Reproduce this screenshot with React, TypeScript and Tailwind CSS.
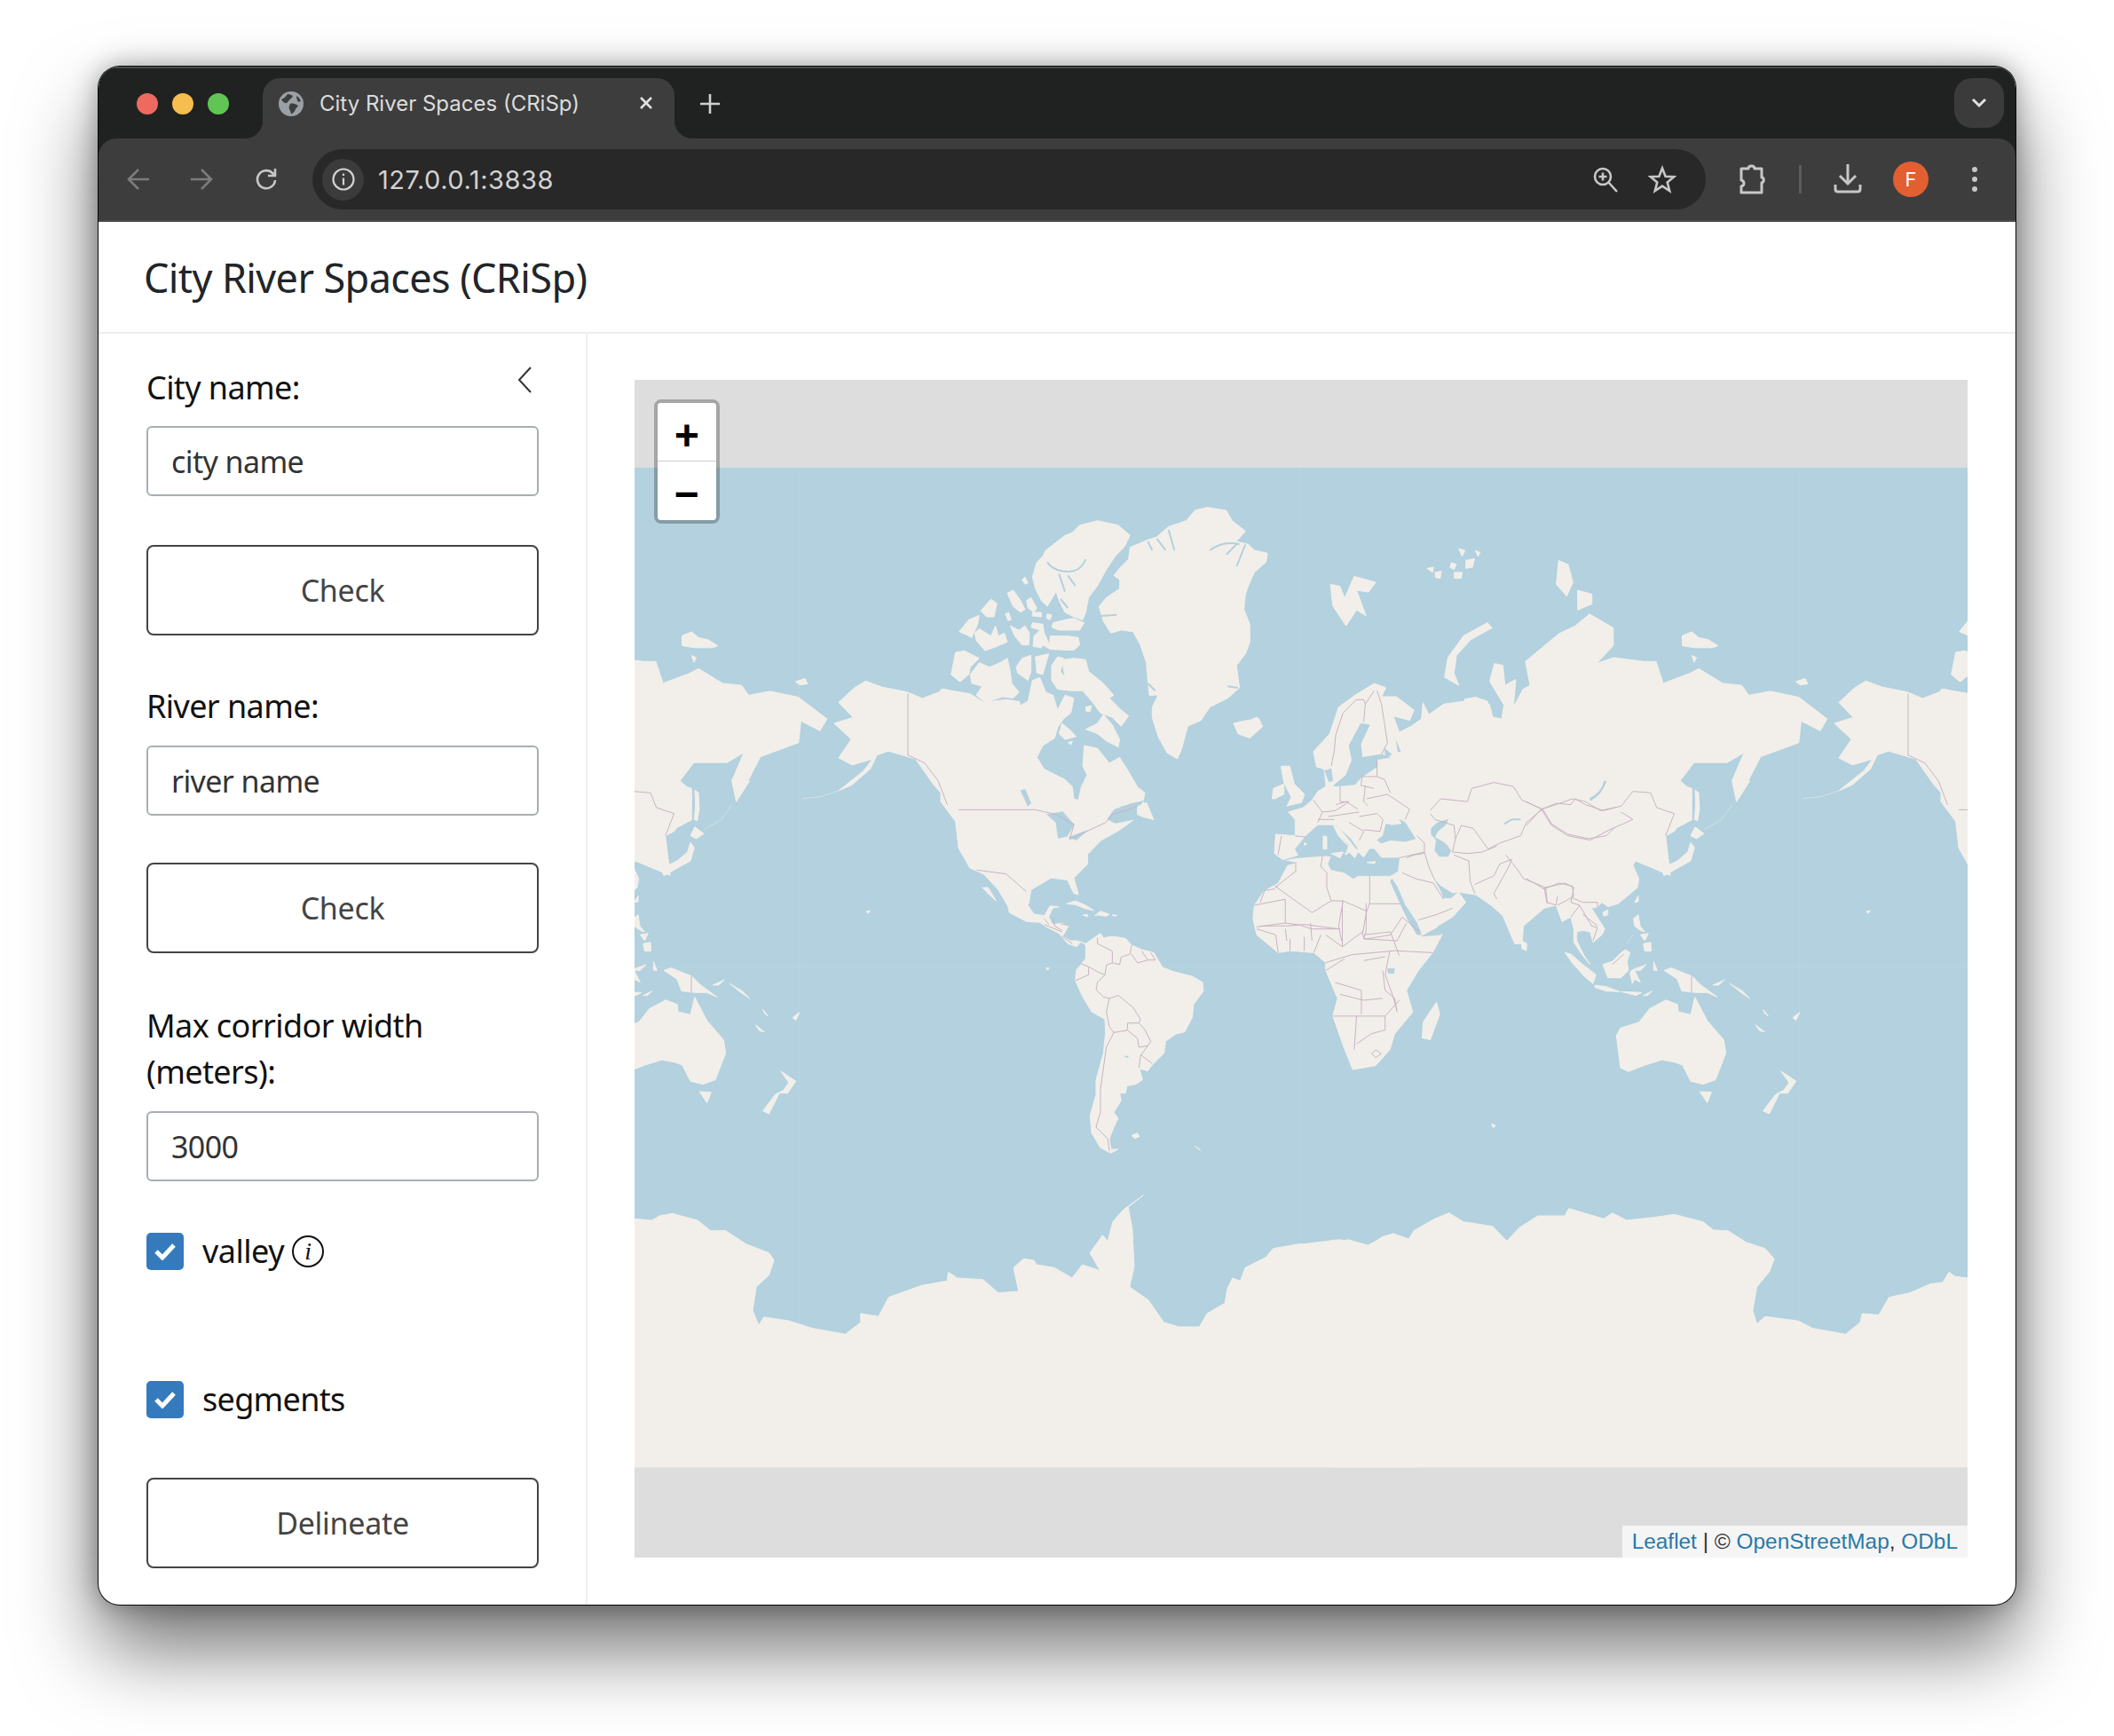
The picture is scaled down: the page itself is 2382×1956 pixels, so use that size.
import React from "react";

const Z4 = "translate(700 420) scale(.5102 .4464)";
const Z5 = "translate(1400 540) scale(.5357 .4464)";
const Z7 = "translate(700 1100) scale(.574 .3333)";
const Z8 = "translate(1500 1100) scale(.4656 .3333)";
const Z9 = "translate(1080 1000) scale(.3333)";
const Z10 = "translate(1420 760) scale(.3333)";
const Z11 = "translate(1720 880) scale(.3333)";
const Z12 = "translate(1060 570) scale(.3333)";

type Shape = { t: string; k: "land" | "water" | "river" | "line" | "chain"; d: string };

const americas: Shape[] = [
  // greenland
  { t: Z12, k: "land", d: "M640,140 700,115 730,105 770,70 830,50 860,15 900,5 965,15 985,50 1030,85 1000,120 1040,130 1060,150 1105,160 1100,190 1060,225 1040,270 1030,300 1025,350 1045,400 1045,460 1030,500 1000,540 1010,615 970,650 910,680 880,725 835,745 815,820 800,855 765,835 735,780 715,715 715,680 735,640 705,640 700,590 695,530 675,470 650,425 610,420 575,430 550,390 535,340 560,310 605,280 605,250 585,235 610,205 635,180z" },
  { t: Z12, k: "river", d: "M910,150C950,120 990,125 1010,130M965,165 1000,130M1030,130 1000,205M540,372 595,368M970,610 1005,615M700,600 725,625M700,120 715,150M730,110 760,150M770,80 790,150" },
  // iceland
  { t: Z12, k: "land", d: "M990,735 1020,728 1075,718 1088,745 1045,785 1005,770z" },
  // ellesmere and arctic islands
  { t: Z12, k: "land", d: "M355,150 420,100 445,90 470,65 530,50 600,65 640,100 620,140 590,170 560,215 530,270 500,310 490,360 480,385 450,375 420,360 400,320 390,290 360,340 340,320 320,280 310,240 325,190 345,170z" },
  { t: Z12, k: "river", d: "M360,190C380,220 420,225 450,220 470,215 485,195 490,180M400,230 420,290M430,235 455,270M405,315 430,345" },
  { t: Z12, k: "land", d: "M275,250 285,240 295,260 285,265zM225,295 245,285 270,320 285,350 270,360 245,340zM290,320 305,310 325,345 315,360 295,345zM135,355 170,315 190,330 180,375 155,375zM62,425 95,385 130,370 125,400 105,445 85,435zM115,430 130,415 170,440 185,405 195,440 215,430 225,460 190,475 150,490 120,455zM235,405 265,420 285,405 300,430 298,470 275,470 250,440zM218,365 230,360 238,385 228,388zM310,395 345,400 350,430 368,470 370,440 430,440 465,445 470,470 450,488 370,485 345,470 340,480 312,475 315,440 335,420 305,410zM380,395 420,385 450,380 485,395 470,420 400,420 375,410zM310,360 340,360 340,375 310,372zM360,365 375,368 370,385 358,380zM35,570 50,495 80,490 130,515 100,545 95,570 65,595zM100,570 130,530 165,545 200,530 225,515 235,560 240,600 265,630 245,650 210,645 150,665 120,640 140,610 105,600zM255,545 275,515 305,505 305,560 295,590 260,565zM320,510 365,500 345,570 325,565zM375,540 395,510 415,515 405,560 420,580 410,520 450,515 490,520 500,560 550,600 585,640 570,650 610,690 635,710 610,745 580,715 540,700 510,660 480,625 440,625 395,620 375,590zM400,770 410,735 440,760 458,780 420,790zM490,755 530,735 550,705 580,740 605,790 600,815 560,795 530,770zM430,800 445,795 440,808zM490,680 510,675 505,695 492,695z" },
  // canada mainland
  { t: Z12, k: "land", d: "M0,620 15,620 50,630 110,650 140,665 135,680 190,670 225,655 260,680 295,660 310,590 335,580 355,630 380,640 395,690 420,640 450,650 440,700 415,720 395,750 385,785 345,810 325,850 350,890 420,925 445,950 450,990 465,995 475,950 495,910 480,880 485,810 530,820 570,870 605,850 630,890 665,950 690,970 685,995 640,1005 585,1025 560,1060 600,1080 60,1080 0,1000z" },
  { t: Z12, k: "land", d: "M660,1040 685,1000 718,1060 680,1050z" },
  { t: Z12, k: "water", d: "M45,725 100,705 110,715 75,750 60,735zM120,830 150,805 188,795 160,815 135,835zM175,870 205,860 185,878zM270,962 285,958 305,1005 295,1015z" },
  // alaska and west canada
  { t: Z4, k: "land", d: "M480,832 515,795 540,778 575,793 632,806 665,822 715,800 770,810 800,832 850,825 880,830 880,1000 740,1110 725,1085 690,1040 650,975 590,955 565,965 550,1000 510,1040 480,1055 535,1005 555,975 510,990 480,972 508,925 470,885 512,870z" },
  { t: Z4, k: "chain", d: "M480,1055 440,1070 400,1075" },
  { t: Z4, k: "land", d: "M385,780 405,772 412,785 395,788z" },
  // usa
  { t: Z4, k: "land", d: "M738,1130 745,1100 1075,1100 1072,1125 1085,1140 1130,1130 1100,1155 1060,1180 1030,1215 1030,1240 1000,1275 1008,1315 1000,1315 985,1280 950,1275 905,1305 900,1340 860,1340 845,1320 800,1265 770,1250 745,1200z" },
  { t: Z4, k: "water", d: "M940,1115 975,1108 1000,1140 985,1170 965,1175 960,1135zM988,1172 1030,1155 1005,1180zM1160,1092 1105,1095 1075,1125 1090,1132 1115,1110 1140,1120z" },
  { t: Z4, k: "land", d: "M1140,1095 1160,1085 1176,1128 1140,1115z" },
  // mexico and central america
  { t: Z9, k: "land", d: "M130,0 168,65 172,85 230,115 275,118 300,135 340,155 370,190 400,200 415,182 435,200 430,190 400,180 378,180 352,165 372,130 350,120 318,125 305,100 318,70 340,65 310,62 290,95 255,90 235,60 222,20 225,0zM80,0 100,0 128,45 110,30zM365,55 395,45 430,60 458,78 430,72 395,58zM460,95 480,80 510,90 500,97 470,93zM420,92 437,92 435,100zM520,92 537,94 525,98zM380,0 400,0 405,25 390,15z" },
  // south america
  { t: Z9, k: "land", d: "M430,190 465,165 480,155 490,170 520,165 565,172 585,195 620,210 660,220 690,270 730,285 790,300 825,320 828,350 795,395 790,440 765,488 735,495 700,520 695,560 655,600 640,620 612,612 622,650 600,665 570,670 565,695 545,695 550,720 525,760 540,780 525,810 510,850 515,885 540,885 515,898 480,880 450,830 445,770 465,700 465,650 490,560 497,490 495,445 450,420 420,370 395,315 398,280 430,240zM585,838 605,830 612,842 595,848zM800,875 818,888 808,880zM296,272 306,272 302,280z" },
  { t: Z9, k: "water", d: "M560,570 575,570 570,576z" },
  { t: Z9, k: "line", d: "M290,105 305,125M320,100 325,130 350,145M345,122 370,128M290,125 350,150M350,165 385,190M470,170 470,190 520,215 520,255 500,262 495,295 470,320M415,258 445,270 470,285 495,295M440,270 440,295 395,315M470,320 465,345 490,370 510,375 500,420 510,470 525,490M510,375 540,365 590,405 615,445 610,458 572,458 570,483 525,490M525,490 500,540 480,680 480,760 465,810 505,850 510,890M572,483 605,510 610,540 640,535 650,520 630,480 610,458M640,535 615,570 610,610M615,565 655,595M520,255 545,260 550,235 580,225 585,195M585,225 605,255 640,245 620,215M640,245 665,245 650,220" },
  { t: Z4, k: "line", d: "M633,810 633,965 670,985 700,1030 720,1090M745,1103 915,1103 960,1115 1000,1140 990,1178 1070,1135 1085,1115 1140,1095M785,1255 850,1265 895,1310" },
];

const eastern: Shape[] = [
  // europe and asia
  { t: Z10, k: "land", d: "M75,625 48,605 52,540 118,545 118,490 95,465 145,450 175,425 195,395 222,378 218,335 215,320 190,312 180,260 235,200 265,110 320,70 385,30 425,45 410,75 460,75 520,120 505,155 450,140 470,195 510,175 545,150 550,95 570,135 620,100 690,90 775,100 790,160 1200,160 1200,500 1000,780 960,790 890,850 885,910 860,910 820,815 780,780 730,745 700,740 670,735 695,770 650,820 600,850 545,870 480,680 380,640 150,640z" },
  { t: Z5, k: "land", d: "M467,555 490,550 515,560 525,600 545,605 550,570 520,510 530,465 548,470 552,520 575,505 570,575 590,530 605,520 595,460 630,425 665,390 700,370 730,340 780,375 780,420 745,465 780,450 845,460 870,460 885,515 940,490 960,478 1010,515 1050,520 1065,545 1110,535 1170,550 1230,605 1215,635 1175,610 1170,665 1125,685 1090,700 1060,770 1040,810 1030,760 1055,690 1020,715 950,715 915,770 945,780 945,860 905,885 890,900 900,1000 500,800z" },
  { t: Z11, k: "land", d: "M0,0 520,0 555,30 560,60 530,125 500,170 470,185 440,215 415,235 410,215 375,225 345,235 380,250 360,285 380,330 375,360 340,390 310,415 275,425 255,410 240,425 220,430 265,500 255,520 225,545 215,510 190,505 170,510 170,540 195,590 215,620 190,590 160,545 160,500 150,460 120,475 100,420 65,420 35,445 0,475z" },
  // africa
  { t: Z5, k: "land", d: "M22,1110 25,1075 45,1040 75,1020 95,975 175,950 330,950 340,1000 420,1150 400,1195 370,1240 345,1290 358,1345 320,1400 310,1440 280,1480 232,1490 215,1440 190,1355 200,1310 175,1240 175,1220 150,1195 100,1190 75,1195 30,1150z" },
  // seas
  { t: Z10, k: "water", d: "M78,628 130,612 118,590 155,545 195,510 245,510 262,545 300,585 285,605 265,600 240,615 215,613 120,620zM240,615 262,600 290,610 300,580 335,605 350,620 370,590 385,590 410,620 470,620 465,665 440,680 380,680 330,680 315,690 285,670 240,660 230,640zM255,510 305,555 330,590 300,580 262,530zM395,560 415,545 425,505 445,510 480,505 470,490 490,500 525,555 490,565 440,560 410,570zM578,520 600,500 635,490 625,510 600,530 590,550 625,570 645,595 635,615 605,615 590,595 595,560 578,540zM248,375 290,340 310,290 300,240 340,165 370,170 340,235 345,280 410,270 440,280 395,288 395,312 345,345 320,372 255,378zM218,325 240,318 245,360 232,362zM445,690 462,715 490,780 530,840 545,880 530,880 500,830 480,790 440,700zM545,885 610,880 650,825 600,855zM590,695 610,715 650,740 665,738 645,755 620,755 610,730zM460,225 475,262 465,260zM420,250 445,270 425,280z" },
  { t: Z10, k: "river", d: "M1165,360C1160,390 1140,410 1115,425M825,505 850,490 880,490" },
  // med islands
  { t: Z10, k: "land", d: "M213,545 225,548 225,590 213,590zM240,605 280,600 270,620zM360,635 390,632 385,640zM148,568 158,572 150,578zM290,610 300,575 285,560 260,530 250,515 262,515 300,560 330,600 320,620 300,600z" },
  // uk and ireland
  { t: Z10, k: "land", d: "M70,310 100,310 115,370 150,405 140,432 90,445 105,415 80,365zM40,420 45,385 80,370 80,405 50,420z" },
  // arctic russia, madagascar, sri lanka
  { t: Z5, k: "land", d: "M185,265 205,270 215,300 235,245 280,260 265,285 240,280 260,345 240,330 218,370 190,320zM515,362 525,375 480,405 450,445 445,490 455,520 425,500 432,450 465,395zM665,205 685,215 695,260 682,295 660,265zM705,280 735,290 735,315 705,330zM925,395 945,385 960,400 980,405 1000,420 990,425 950,425 925,420zM945,445 955,450 950,462zM1165,510 1185,505 1185,515zM378,1410 380,1370 408,1320 415,1350 395,1415zM587,1165 598,1172 597,1190 588,1185zM0,620 30,600 42,625 15,650z" },
  // franz josef land
  { t: Z5, k: "land", d: "M388,225 402,222 400,235zM405,235 418,232 416,250 406,248zM440,210 450,215 445,228 436,222zM455,175 468,180 462,195zM470,205 488,200 484,222 470,225zM490,180 500,185 495,195zM445,235 462,235 460,250 446,250z" },
  // japan, korea, sakhalin and pacific islands
  { t: Z11, k: "land", d: "M415,240 440,230 450,265 425,285 420,245zM570,30 582,40 585,95 578,135 568,130 572,80zM555,185 570,155 600,178 575,195zM455,295 510,270 545,240 555,208 568,225 555,270 510,295 465,320zM695,0 755,0 710,70zM365,410 378,388 378,408zM258,445 275,435 275,452 262,457zM362,465 378,452 384,490 400,510 385,505 365,490zM395,550 420,545 422,575 400,575zM385,520 412,515 400,540zM258,620 290,610 320,580 335,570 350,580 340,610 345,640 320,665 275,665zM130,580 150,585 190,620 235,655 225,685 195,660 155,615zM230,690 270,695 315,712 270,710 232,698zM320,712 390,715 370,725zM395,725 425,710 410,725zM355,640 405,620 385,640 365,640 385,680 365,670 358,685 350,650zM465,640 490,632 560,660 590,690 645,730 610,715 570,715 525,710 510,670zM630,690 670,672 650,690zM430,610 442,640 430,640zM775,825 805,848 790,845zM900,800 922,785 910,808zM1150,440 1162,438 1155,448zM800,772 818,795 805,785zM688,685 730,710 755,735 725,715z" },
  { t: Z11, k: "river", d: "M215,60C240,50 260,25 268,0" },
  { t: Z11, k: "chain", d: "M600,165 660,130 695,80M340,550 360,520" },
  // australia and new zealand
  { t: Z8, k: "land", d: "M690,200 700,175 745,155 770,110 810,80 838,95 840,120 870,130 880,70 910,150 950,215 955,260 930,350 900,365 870,355 850,300 830,290 800,283 760,300 720,322 700,310zM892,390 920,392 910,428zM1088,320 1125,355 1105,395 1085,395 1060,465 1045,455 1075,400 1095,385 1108,360zM388,498 398,505 392,512zM1028,165 1045,185 1035,182zM1118,140 1133,122 1125,148z" },
  // borders
  { t: Z10, k: "line", d: "M385,55 355,100 350,85 325,85 280,130 255,205 250,260 240,310M355,100 350,160M395,55 410,100 430,230 410,270M395,290 395,345 345,345 340,375 385,385M270,378 270,430M355,375 350,430 365,445M360,420 430,405 445,415 505,455 490,490M395,345 420,355 440,400M180,425 210,465 195,500M195,490 250,490M210,465 255,460 300,430 270,430M255,440 290,430 330,455M230,480 300,470 335,465M335,480 395,470 415,490 405,530 350,525M300,500 350,530 335,560M530,545 555,570 555,600M72,545 60,610M118,545 155,550M470,620 555,600M495,620 520,610 555,605M555,600 570,650 590,695M480,670 525,690 585,705 620,760M535,830 600,810 650,790M370,680 370,775M370,775 475,775M655,610 705,630 710,700 725,740M725,710 790,680 810,640 850,625M575,460 610,420 700,430 715,385 790,365 855,378 885,425 955,455M575,470 590,490 655,510 660,555 680,510 720,520 770,590 810,570 880,545 900,500 955,455M660,555 650,600 700,605 750,600 800,580M955,455 1000,435 1050,440 1065,420 1100,440 1160,460 1200,450M955,455 985,505 1040,540 1110,555 1170,545 1200,515M830,610 870,660 890,690 965,720 1030,705 1060,720 1050,770 1080,780M850,625 840,650 790,740 800,760M965,720 970,770 1000,780 1005,750M120,635 120,665 50,720M0,770 15,730 50,725M50,715 175,805 240,765 225,720 225,670 205,650 210,615M240,765 280,765 360,800 370,775M280,765 265,850 275,900M360,800 345,880 355,895 440,880 480,820M480,820 540,870M0,850 90,850 150,845 265,860M85,860 90,900M170,840 175,900M350,880 440,870 470,950" },
  { t: Z11, k: "line", d: "M0,70 50,95 100,80 155,60 200,70 250,100 320,85 360,35 420,40 440,90 500,110 470,185M0,150 50,95 85,150 140,185 215,200 280,165 360,130 320,105M0,330 60,365 110,345 155,355 160,390 105,420M60,360 70,415M155,395 190,410 240,410 240,425M150,460 180,420 220,490 240,495 225,540M190,450 240,490M558,660 558,715M290,620 330,585" },
  { t: Z5, k: "line", d: "M175,1220 230,1200 320,1190M310,1190 300,1250 315,1300 325,1340M195,1270 250,1290 250,1350M190,1355 300,1355 330,1315M240,1355 235,1440M300,1355 300,1390 270,1400 240,1425M320,1190 400,1195M215,1210 175,1240M255,1140 210,1180 175,1150M280,1440 292,1450 280,1460 272,1450zM295,1240 300,1290 320,1310 325,1345M30,1135 70,1150 75,1195M100,1160 100,1190M130,1155 130,1190M165,1150 150,1195M90,1120 120,1125 145,1135 205,1135M25,1075 90,1060 90,1120 30,1130M260,1070 260,1140 255,1160 325,1165 345,1120M210,1065 210,1180M255,1215 300,1205M205,1300 255,1315 295,1310" },
  { t: Z5, k: "water", d: "M305,1235 320,1235 318,1248 306,1246z" },
];

const antarctica: Shape[] = [
  { t: Z7, k: "land", d: "M26,820 60,825 75,810 100,802 150,825 175,860 205,860 245,905 290,935 300,960 290,1010 265,1050 258,1130 270,1180 280,1152 330,1165 375,1190 440,1210 470,1170 470,1140 505,1150 525,1085 590,1045 640,1030 642,1000 660,1020 710,1025 740,1070 780,1065 770,985 790,955 810,960 815,975 850,985 885,1020 905,975 940,995 920,935 945,875 955,895 965,830 985,790 1025,740 995,780 1003,850 1007,980 998,1050 1035,1095 1065,1170 1095,1185 1135,1185 1150,1140 1185,1105 1190,1055 1200,1020 1215,1030 1225,985 1265,950 1280,920 1330,905 1340,905 1410,890 1465,910 1500,880 1515,870 1550,890 1568,850 1568,1659 26,1659z" },
  { t: Z8, k: "land", d: "M0,905 40,890 90,910 125,880 150,870 185,895 200,860 250,820 285,800 320,830 390,845 425,895 455,850 500,810 565,810 575,785 660,820 680,800 715,825 780,815 830,805 900,830 925,858 960,860 1005,900 1050,920 1072,955 1060,1000 1030,1050 1020,1130 1030,1175 1050,1150 1130,1165 1165,1190 1245,1210 1280,1170 1285,1140 1325,1145 1350,1085 1400,1070 1450,1040 1480,1035 1495,1000 1510,1015 1540,1020 1540,1659 0,1659z" },
];

function Layer({ items, dx = 0 }: { items: Shape[]; dx?: number }) {
  return (
    <g transform={`translate(${dx} 0)`}>
      {items.map((s, i) => {
        if (s.k === "land") return <path key={i} transform={s.t} d={s.d} fill="#f2efea" stroke="#f2efea" strokeWidth="1" vectorEffect="non-scaling-stroke" />;
        if (s.k === "water") return <path key={i} transform={s.t} d={s.d} fill="#b3d1de" stroke="#b3d1de" strokeWidth="0.5" vectorEffect="non-scaling-stroke" />;
        if (s.k === "river") return <path key={i} transform={s.t} d={s.d} fill="none" stroke="#b3d1de" strokeWidth="2" vectorEffect="non-scaling-stroke" />;
        if (s.k === "chain") return <path key={i} transform={s.t} d={s.d} fill="none" stroke="#d3e2e6" strokeWidth="1" vectorEffect="non-scaling-stroke" />;
        return <path key={i} transform={s.t} d={s.d} fill="none" stroke="#c8b3c2" strokeWidth="1" vectorEffect="non-scaling-stroke" />;
      })}
    </g>
  );
}

function WorldMap() {
  return (
    <svg viewBox="715 428 1502 1327" className="block w-full h-full blur-[0.6px]" strokeLinejoin="round">
      <rect x="715" y="527" width="1502" height="1126" fill="#b3d1de" />
      <Layer items={antarctica} />
      <Layer items={eastern} dx={-1127} />
      <Layer items={americas} />
      <Layer items={eastern} />
      <Layer items={americas} dx={1127} />
      <path d="M901,527V1653M1465,527V1653M2028,527V1653M715,1090H2217" stroke="#ffffff" strokeOpacity="0.12" strokeWidth="1" fill="none" />
    </svg>
  );
}

const GlobeIcon = () => (
  <svg width="28" height="28" viewBox="0 0 28 28">
    <circle cx="14" cy="14" r="14" fill="#9aa0a6" />
    <path d="M3 9c3-1 5-3 7-6 3 0 4 1 6 2-1 3-3 3-4 5-2 1-2 4-4 3-2 0-4-2-5-4zM13 14c3-1 6 0 9 2-1 2-2 2-3 4-1 3-3 4-5 6 0-3-1-4-2-6-1-2 0-4 1-6zM20 5c2 1 4 3 5 6l-3 1c-1-2-2-4-2-7z" fill="#3d3d3d" />
  </svg>
);

function Toolbar() {
  return (
    <div className="h-[94px] bg-[#3d3d3d] border-b-2 border-[#4a4a4a] rounded-t-[20px] flex items-center pl-[31px] shrink-0">
      <svg width="28" height="28" viewBox="0 0 28 28" fill="none" stroke="#7c7c7c" strokeWidth="2.6">
        <path d="M26 14H3M14 3 3 14l11 11" />
      </svg>
      <svg width="28" height="28" viewBox="0 0 28 28" fill="none" stroke="#7c7c7c" strokeWidth="2.6" className="ml-[43px]">
        <path d="M2 14h23M14 3l11 11-11 11" />
      </svg>
      <svg width="28" height="28" viewBox="0 0 28 28" fill="none" stroke="#c7c7c7" strokeWidth="2.6" className="ml-[45px]">
        <path d="M24 15a10 10 0 1 1-3-8l3 3M24 2v8h-8" />
      </svg>
      <div className="ml-[38px] w-[1570px] h-[68px] rounded-[34px] bg-[#282828] flex items-center pl-[11px] pr-[33px]">
        <div className="w-[47px] h-[47px] rounded-full bg-[#3b3b3b] flex items-center justify-center">
          <svg width="26" height="26" viewBox="0 0 26 26" fill="none" stroke="#d0d0d0" strokeWidth="2.2">
            <circle cx="13" cy="13" r="11.5" />
            <path d="M13 11.5v8M13 6.5v2.6" />
          </svg>
        </div>
        <span className="ml-[16px] text-[29px] tracking-[0.55px] leading-none text-[#d2d2d2] font-['Inter',sans-serif]">127.0.0.1:3838</span>
        <svg width="30" height="30" viewBox="0 0 30 30" fill="none" stroke="#c7c7c7" strokeWidth="2.6" className="ml-auto">
          <circle cx="12" cy="12" r="9" />
          <path d="M18.5 18.5 28 29M12 7.5v9M7.5 12h9" />
        </svg>
        <svg width="32" height="32" viewBox="0 0 32 32" fill="none" stroke="#c7c7c7" strokeWidth="2.6" className="ml-[33px]">
          <path d="M16 3.5l3.6 9.2 9.6.5-7.5 6.2 2.5 9.6-8.2-5.4-8.2 5.4 2.5-9.6-7.5-6.2 9.6-.5z" />
        </svg>
      </div>
      <svg width="32" height="36" viewBox="0 0 32 36" fill="none" stroke="#c7c7c7" strokeWidth="3" className="ml-[37px]">
        <path d="M3 6h8c0-4 7-4 7 0h8v10c3 0 3 5 0 6v11H3v-7c4-1 4-6 0-7z" strokeLinejoin="round" />
      </svg>
      <div className="ml-[36px] w-[3px] h-[32px] bg-[#5c5c5c]" />
      <svg width="32" height="34" viewBox="0 0 32 34" fill="none" stroke="#c7c7c7" strokeWidth="3" className="ml-[36px]">
        <path d="M16 0v22M7 13l9 9 9-9M2 23v5c0 2 1 3 3 3h22c2 0 3-1 3-3v-5" />
      </svg>
      <div className="ml-[35px] w-[40px] h-[40px] rounded-full bg-[#e25f32] flex items-center justify-center text-white text-[22px] font-['Inter',sans-serif]">F</div>
      <div className="ml-[49px] flex flex-col gap-[5px]">
        <div className="w-[6px] h-[6px] rounded-full bg-[#c7c7c7]" />
        <div className="w-[6px] h-[6px] rounded-full bg-[#c7c7c7]" />
        <div className="w-[6px] h-[6px] rounded-full bg-[#c7c7c7]" />
      </div>
    </div>
  );
}

function TitleBar() {
  return (
    <div className="h-[79px] bg-[#202222] flex items-start shrink-0 border-t-2 border-[#4a4a4a] -mb-[20px] pb-[20px] box-content">
      <div className="flex gap-[16px] ml-[43px] mt-[28px]">
        <div className="w-[24px] h-[24px] rounded-full bg-[#ee6a5f]" />
        <div className="w-[24px] h-[24px] rounded-full bg-[#f5be4f]" />
        <div className="w-[24px] h-[24px] rounded-full bg-[#61c554]" />
      </div>
      <div className="relative ml-[38px] mt-[11px] w-[464px] h-[68px] bg-[#3d3d3d] rounded-t-[20px] flex items-center pl-[18px] pb-[10px] z-30">
        <div className="absolute -left-[20px] bottom-0 w-[20px] h-[20px] bg-[#3d3d3d]">
          <div className="w-full h-full bg-[#202222] rounded-br-[20px]" />
        </div>
        <div className="absolute -right-[20px] bottom-0 w-[20px] h-[20px] bg-[#3d3d3d]">
          <div className="w-full h-full bg-[#202222] rounded-bl-[20px]" />
        </div>
        <GlobeIcon />
        <span className="ml-[18px] text-[24px] leading-none text-[#dcdcdc] font-['Inter',sans-serif] whitespace-nowrap">City River Spaces (CRiSp)</span>
        <svg width="16" height="16" viewBox="0 0 16 16" stroke="#e0e0e0" strokeWidth="2.6" className="absolute left-[424px] top-[20px]">
          <path d="M2 2l12 12M14 2 2 14" />
        </svg>
      </div>
      <svg width="22" height="22" viewBox="0 0 22 22" stroke="#d0d0d0" strokeWidth="2.6" className="ml-[29px] mt-[29px]">
        <path d="M11 0v22M0 11h22" />
      </svg>
      <div className="ml-auto mr-[13px] mt-[11px] w-[56px] h-[56px] rounded-[20px] bg-[#3b3b3b] flex items-center justify-center">
        <svg width="18" height="12" viewBox="0 0 18 12" fill="none" stroke="#e0e0e0" strokeWidth="3">
          <path d="M2 2l7 7 7-7" />
        </svg>
      </div>
    </div>
  );
}

const inputCls = "block w-[442px] h-[79px] border-2 border-[#a9aeb4] rounded-[6px] pl-[26px] text-[34px] tracking-[-0.6px] text-[#333] bg-white outline-none";
const btnCls = "block w-[442px] h-[102px] border-2 border-[#444] rounded-[8px] bg-white text-[34px] tracking-[-0.3px] text-[#444]";
const labelCls = "block text-[36px] tracking-[-0.6px] leading-[52px] text-[#111]";

const Check = () => (
  <div className="w-[42px] h-[42px] rounded-[5px] bg-[#357abd] flex items-center justify-center shrink-0">
    <svg width="24" height="20" viewBox="0 0 24 20" fill="none" stroke="#fff" strokeWidth="5">
      <path d="M2 10l7 7L22 3" />
    </svg>
  </div>
);

function Sidebar() {
  return (
    <div className="relative w-[551px] shrink-0 border-r-2 border-[#eeeeee] pl-[54px] pt-[35px]">
      <svg width="18" height="32" viewBox="0 0 18 32" fill="none" stroke="#333" strokeWidth="2" className="absolute left-[471px] top-[36px]">
        <path d="M16 2 3 16l13 14" />
      </svg>
      <label className={`${labelCls} mb-[17px]`}>City name:</label>
      <input className={inputCls} defaultValue="city name" />
      <button className={`${btnCls} mt-[55px]`}>Check</button>
      <label className={`${labelCls} mt-[54px] mb-[18px]`}>River name:</label>
      <input className={inputCls} defaultValue="river name" />
      <button className={`${btnCls} mt-[53px]`}>Check</button>
      <label className={`${labelCls} mt-[56px] mb-[18px] w-[442px]`}>Max corridor width (meters):</label>
      <input className={inputCls} defaultValue="3000" />
      <div className="mt-[58px] flex items-center h-[42px]">
        <Check />
        <span className="ml-[21px] text-[36px] tracking-[-0.5px] text-[#111] leading-none">valley</span>
        <span className="ml-[9px] w-[36px] h-[36px] rounded-full border-2 border-[#111] flex items-center justify-center text-[28px] italic leading-none font-['Liberation_Serif',serif] text-[#111]">i</span>
      </div>
      <div className="mt-[125px] flex items-center h-[42px]">
        <Check />
        <span className="ml-[21px] text-[36px] tracking-[-0.7px] text-[#111] leading-none">segments</span>
      </div>
      <button className={`${btnCls} mt-[67px]`}>Delineate</button>
    </div>
  );
}

export default function App() {
  return (
    <div className="w-[2382px] h-[1956px] bg-white pl-[111px] pt-[75px] overflow-hidden font-['Noto_Sans',sans-serif]">
      <div className="w-[2160px] h-[1733px] rounded-[24px] overflow-hidden flex flex-col bg-white shadow-[0_50px_90px_rgba(0,0,0,0.55),0_0_30px_rgba(0,0,0,0.35),0_0_0_1px_#111]">
        <TitleBar />
        <div className="relative z-20">
          <Toolbar />
        </div>
        <div className="h-[126px] border-b-2 border-[#eeeeee] flex items-center pl-[51px] shrink-0">
          <h1 className="text-[45px] tracking-[-0.6px] leading-none text-[#212529]">City River Spaces (CRiSp)</h1>
        </div>
        <div className="flex flex-1 min-h-0">
          <Sidebar />
          <div className="flex-1 pl-[53px] pr-[54px] pt-[52px] pb-[53px]">
            <div className="relative w-full h-full bg-[#dddddd] overflow-hidden">
              <WorldMap />
              <div className="absolute left-[22px] top-[22px] w-[74px] h-[140px] rounded-[8px] border-[4px] border-black/25 bg-clip-padding flex flex-col overflow-hidden">
                <div className="h-[66px] pt-[14px] bg-white border-b border-[#ccc] flex items-center justify-center text-[48px] font-bold leading-none text-black font-['Liberation_Mono',monospace]">+</div>
                <div className="flex-1 pt-[14px] bg-white flex items-center justify-center text-[48px] font-bold leading-none text-black font-['Liberation_Mono',monospace]">−</div>
              </div>
              <div className="absolute right-0 bottom-0 h-[36px] bg-white/70 px-[11px] flex items-center text-[24.4px] leading-none text-[#333] font-['Liberation_Sans',sans-serif] whitespace-nowrap">
                <a className="text-[#2a79a8]">Leaflet</a>
                <span className="whitespace-pre"> | © </span>
                <a className="text-[#2a79a8]">OpenStreetMap</a>
                <span className="whitespace-pre">, </span>
                <a className="text-[#2a79a8]">ODbL</a>
              </div>
            </div>
          </div>
        </div>
      </div>
    </div>
  );
}
